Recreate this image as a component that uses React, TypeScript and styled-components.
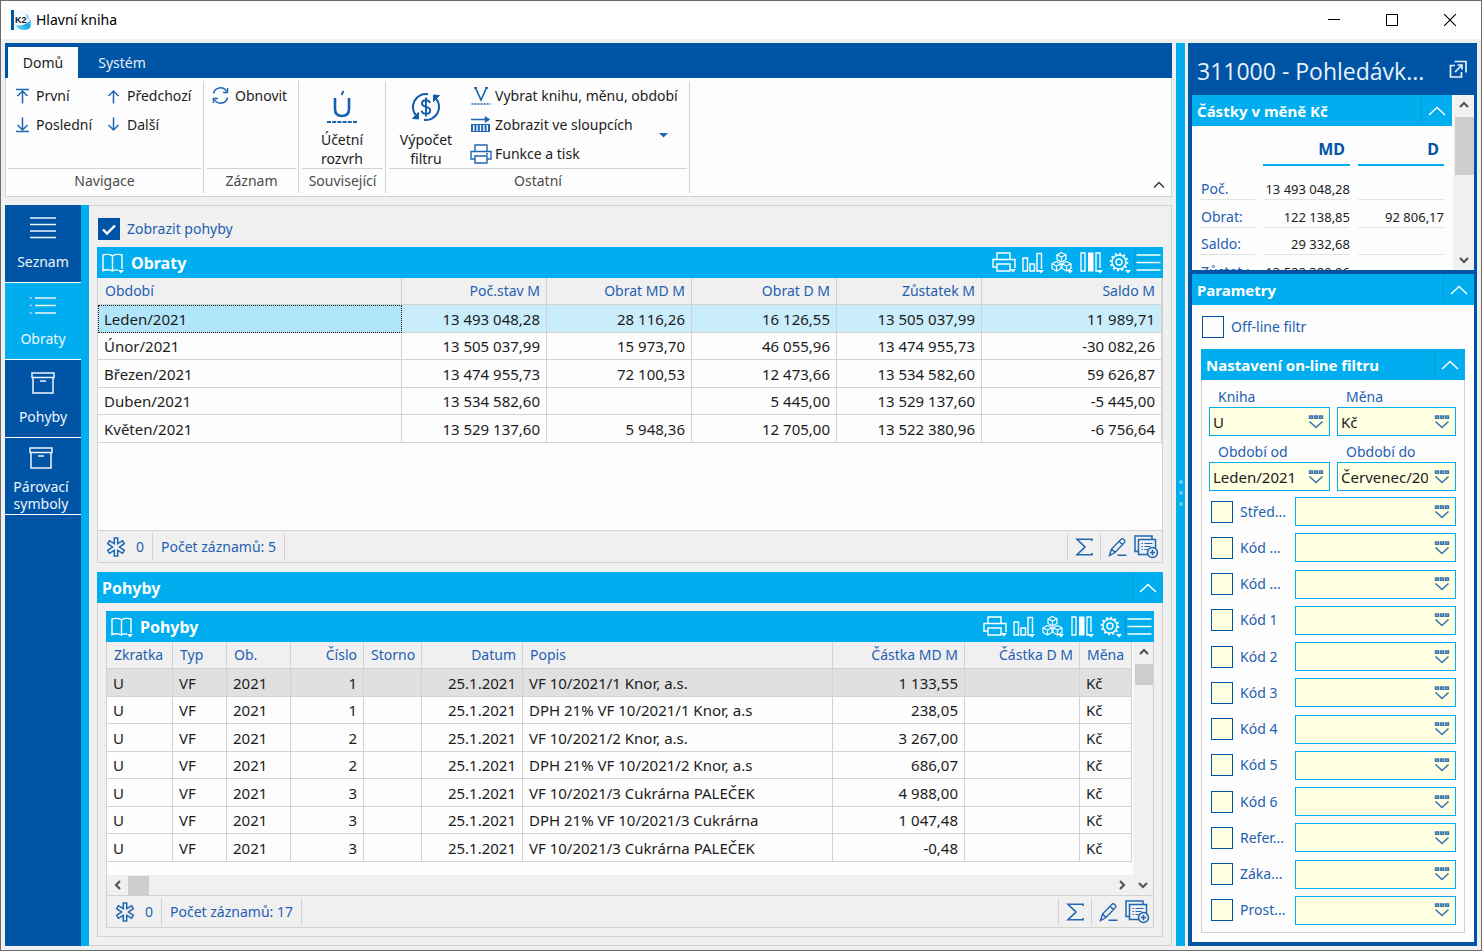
import React from "react";
import styled, { createGlobalStyle, css } from "styled-components";

const navy = "#0054a6";
const cyan = "#00aeef";
const label = "#1f5fb0";
const face = "#f0f0f0";
const paper = "#fdfdfd";
const rule = "#d2d2d2";
const field = "#ffffe1";

const GlobalStyle = createGlobalStyle`
  * { box-sizing: border-box; }
  body {
    margin: 0;
    background: ${face};
    color: #1c1c1c;
    font-family: "Noto Sans", "Open Sans", sans-serif;
    font-size: 14px;
    line-height: 20px;
  }
  button, input { font: inherit; color: inherit; }
  button { border: 0; padding: 0; background: none; cursor: pointer; }
  svg { display: block; flex: none; }
`;

/* ---------- window frame ---------- */

const Window = styled.div`
  min-height: 100vh;
  display: flex;
  flex-direction: column;
  border: 1px solid #6c6c6c;
  background: ${face};
`;

const TitleBar = styled.header`
  display: flex;
  align-items: center;
  height: 38px;
  padding: 0 2px 0 10px;
  background: #fff;
  color: #000;
`;

const WindowTitle = styled.h1`
  flex: 1;
  margin: 0 0 0 5px;
  font-size: 14px;
  font-weight: 400;
`;

const WindowButton = styled.button`
  width: 58px;
  height: 36px;
  display: grid;
  place-items: center;
`;

const Workspace = styled.div`
  flex: 1;
  display: grid;
  grid-template-columns: minmax(0, 1fr) 9px 292px;
  padding: 4px;
`;

const Primary = styled.div`
  display: flex;
  flex-direction: column;
  gap: 8px;
  margin-right: 4px;
  min-width: 0;
`;

const Splitter = styled.div`
  display: flex;
  flex-direction: column;
  align-items: center;
  justify-content: center;
  gap: 7px;
  padding-bottom: 4px;
  background: ${cyan};
`;

const SplitterDot = styled.span`
  width: 4px;
  height: 4px;
  border-radius: 2px;
  background: #62cdf5;
`;

/* ---------- ribbon ---------- */

const Ribbon = styled.section`
  border: 1px solid ${rule};
  border-top: 0;
  background: ${paper};
`;

const TabStrip = styled.div`
  display: flex;
  height: 35px;
  margin: 0 -1px;
  padding: 4px 3px 0;
  background: ${navy};
`;

const Tab = styled.button<{ $active?: boolean }>`
  width: ${(p) => (p.$active ? 70 : 88)}px;
  color: #e6eef7;
  ${(p) => p.$active && css`background: ${paper}; color: #222;`}
`;

const RibbonBody = styled.div`
  display: flex;
  align-items: flex-start;
  gap: 3px;
  height: 118px;
  padding: 3px 4px 0 2px;
`;

const RibbonGroup = styled.div<{ $width: number }>`
  width: ${(p) => p.$width}px;
  height: 112px;
  display: flex;
  flex-direction: column;
  padding-right: 2px;
  border-right: 1px solid ${rule};
`;

const GroupTools = styled.div<{ $inset?: number }>`
  flex: 1;
  display: flex;
  align-items: flex-start;
  padding-left: ${(p) => p.$inset ?? 7}px;
`;

const GroupLabel = styled.div`
  height: 25px;
  padding-top: 2px;
  border-top: 1px solid ${rule};
  color: #4c4c4c;
  text-align: center;
`;

const NavGrid = styled.div`
  display: grid;
  grid-template-columns: 91px auto;
`;

const CommandColumn = styled.div`
  display: flex;
  flex-direction: column;
  margin-left: 14px;
`;

const Command = styled.button<{ $gap?: number }>`
  display: flex;
  align-items: center;
  gap: ${(p) => p.$gap ?? 6}px;
  height: 29px;
  white-space: nowrap;
`;

const BigCommand = styled.button<{ $width: number }>`
  width: ${(p) => p.$width}px;
  height: 87px;
  display: flex;
  flex-direction: column;
  align-items: center;
  line-height: 19px;
`;

const BigIcon = styled.span`
  height: 49px;
  display: flex;
  align-items: center;
  padding-top: 2px;
`;

const MenuArrow = styled.button`
  align-self: center;
  margin-left: -19px;
  padding-top: 22px;
`;

const Collapse = styled.button`
  align-self: flex-end;
  margin: 0 2px 7px auto;
`;

/* ---------- side navigation and content ---------- */

const Body = styled.div`
  flex: 1;
  display: grid;
  grid-template-columns: 84px minmax(0, 1fr);
`;

const SideNav = styled.nav`
  background: ${navy};
  border-right: 8px solid ${cyan};
`;

const SideItem = styled.button<{ $active?: boolean; $tall?: boolean }>`
  width: 100%;
  height: 77px;
  display: flex;
  flex-direction: column;
  align-items: center;
  justify-content: space-between;
  padding: ${(p) => (p.$tall ? "9px 4px 2px 0" : "12px 0 10px")};
  border-bottom: 1px solid #fff;
  background: ${(p) => (p.$active ? cyan : navy)};
  color: #eef5fb;
  line-height: ${(p) => (p.$tall ? 17 : 20)}px;
  &:nth-child(odd) { height: 78px; }
`;

const Content = styled.main`
  display: flex;
  flex-direction: column;
  padding: 8px;
  border: 1px solid ${rule};
  border-left: 0;
`;

const CheckLabel = styled.label`
  display: flex;
  align-items: center;
  gap: 7px;
  color: ${label};
`;

const CheckBox = styled.input<{ $fill?: string }>`
  appearance: none;
  flex: none;
  width: 22px;
  height: 22px;
  margin: 0;
  border: 1px solid ${navy};
  background: ${(p) => p.$fill ?? paper};
  &:checked {
    background: ${navy}
      url("data:image/svg+xml,%3Csvg xmlns='http://www.w3.org/2000/svg' viewBox='0 0 20 20'%3E%3Cpath d='M4 10.5l4 4 8-8' fill='none' stroke='white' stroke-width='2.4'/%3E%3C/svg%3E")
      center / 20px no-repeat;
  }
`;

const ShowMoves = styled(CheckLabel)`
  margin: 4px 0 7px 1px;
`;

const Bar = styled.div`
  display: flex;
  align-items: center;
  height: 31px;
  flex: none;
  padding-left: 5px;
  background: ${cyan};
  color: #fff;
`;

const BarTitle = styled.h2<{ $afterIcon?: boolean }>`
  flex: 1;
  margin: 0;
  padding-left: ${(p) => (p.$afterIcon ? 7 : 0)}px;
  font-size: 16px;
  font-weight: 700;
  line-height: 24px;
`;

const PanelTitle = styled(BarTitle)`
  font-size: 15px;
`;

const BarTools = styled.div`
  display: flex;
  align-items: center;
  gap: 4px;
  padding-right: 2px;
`;

const MenuButton = styled.button`
  height: 27px;
  display: grid;
  align-items: center;
  margin-left: -3px;
  border-left: 1px solid #0797d3;
`;

const BarToggle = styled.button`
  width: 31px;
  height: 27px;
  display: grid;
  place-items: center;
  border-left: 1px solid #0797d3;
`;

const Frame = styled.section`
  display: flex;
  flex-direction: column;
  border: 1px solid ${rule};
  border-top: 0;
`;

const TurnoverFrame = styled(Frame)`
  margin-bottom: 9px;
`;

const TurnoverArea = styled.div`
  height: 252px;
  background: ${paper};
`;

const FullBar = styled(Bar)`
  margin: 0 -1px;
`;

const DataTable = styled.table`
  width: 100%;
  table-layout: fixed;
  border-collapse: separate;
  border-spacing: 0;
  font-size: 15px;
`;

const HeadCell = styled.th<{ $right?: boolean }>`
  height: 27px;
  padding: 0 6px 0 7px;
  border-right: 1px solid ${rule};
  border-bottom: 1px solid ${rule};
  background: ${face};
  color: ${label};
  font-size: 14px;
  font-weight: 400;
  text-align: ${(p) => (p.$right ? "right" : "left")};
  white-space: nowrap;
`;

const Cell = styled.td<{ $right?: boolean }>`
  padding: 0 6px;
  border-right: 1px solid ${rule};
  border-bottom: 1px solid ${rule};
  text-align: ${(p) => (p.$right ? "right" : "left")};
  white-space: nowrap;
  overflow: hidden;
`;

const Row = styled.tr<{ $fill?: string; $focus?: boolean }>`
  height: 28px;
  background: ${(p) => p.$fill ?? paper};
  &:nth-child(even) { height: 27px; }
  ${(p) =>
    p.$focus &&
    css`
      td:first-child {
        background: #b1e6fa;
        outline: 1px dotted #222;
        outline-offset: -1px;
      }
    `}
`;

const StatusBar = styled.footer`
  display: flex;
  align-items: center;
  height: 32px;
  flex: none;
  border-top: 1px solid ${rule};
  color: ${label};
`;

const StatusItem = styled.div`
  display: flex;
  align-items: center;
  gap: 10px;
  height: 27px;
  padding: 0 8px;
  border-right: 1px solid ${rule};
`;

const StatusTools = styled.div`
  display: flex;
  align-items: center;
  margin-left: auto;
  padding-right: 3px;
`;

const StatusTool = styled.button<{ $divider?: boolean }>`
  height: 27px;
  padding: ${(p) => (p.$divider ? "0 6px 0 7px" : 0)};
  border-left: ${(p) => (p.$divider ? `1px solid ${rule}` : "0")};
`;

const MovesFrame = styled(Frame)`
  flex: 1;
`;

const MovesInner = styled(Frame)`
  flex: 1;
  margin: 8px;
`;

const MovesArea = styled.div`
  flex: 1;
  display: grid;
  grid-template-columns: minmax(0, 1fr) 21px;
  grid-template-rows: minmax(0, 1fr) 20px;
`;

const MovesTable = styled.div`
  background: ${paper};
  overflow: hidden;
`;

const ScrollColumn = styled.div`
  display: flex;
  flex-direction: column;
  align-items: center;
  gap: 2px;
  background: ${face};
  border-left: 2px solid #fafafa;
`;

const ScrollRow = styled.div`
  display: flex;
  align-items: center;
  background: ${face};
`;

const ScrollButton = styled.button`
  width: 21px;
  height: 20px;
  flex: none;
  display: grid;
  place-items: center;
`;

const Thumb = styled.div<{ $w: number; $h: number }>`
  width: ${(p) => p.$w}px;
  height: ${(p) => p.$h}px;
  background: #cdcdcd;
`;

const PushEnd = styled(ScrollButton)`
  margin-left: auto;
`;

const PushBottom = styled(ScrollButton)`
  margin-top: auto;
`;

/* ---------- right panel ---------- */

const Side = styled.aside`
  display: flex;
  flex-direction: column;
  margin-left: 3px;
  padding: 0 3px 4px 4px;
  background: ${navy};
`;

const SideHead = styled.div`
  display: flex;
  align-items: center;
  height: 52px;
  padding: 4px 7px 0 5px;
  color: #e8f1fa;
`;

const SideTitle = styled.h2`
  flex: 1;
  margin: 0;
  font-family: "Open Sans", "Noto Sans", sans-serif;
  font-size: 23px;
  font-weight: 400;
  line-height: 32px;
  white-space: nowrap;
`;

const PopOut = styled.button`
  align-self: flex-start;
  padding-top: 13px;
`;

const Amounts = styled.section`
  display: grid;
  grid-template-columns: minmax(0, 1fr) 22px;
  height: 175px;
  flex: none;
  margin-bottom: 4px;
  background: ${paper};
  overflow: hidden;
`;

const AmountsMain = styled.div`
  height: 175px;
  overflow: hidden;
`;

const AmountTable = styled.table`
  width: 100%;
  table-layout: fixed;
  border-collapse: separate;
  border-spacing: 8px 0;
  font-size: 13px;
`;

const AmountHead = styled.th`
  height: 40px;
  padding: 8px 5px 0 0;
  border-bottom: 2px solid ${cyan};
  color: ${navy};
  font-size: 16px;
  text-align: right;
`;

const AmountName = styled.th`
  padding: 0 0 0 1px;
  border-bottom: 1px solid #e4e4e4;
  color: ${label};
  font-size: 14px;
  font-weight: 400;
  text-align: left;
`;

const AmountCell = styled.td`
  padding: 0;
  border-bottom: 1px solid #e4e4e4;
  text-align: right;
  white-space: nowrap;
`;

const AmountRow = styled.tr`
  height: 28px;
  vertical-align: bottom;
  &:first-child { height: 34px; }
  &:nth-child(3) { height: 27px; }
`;

const Params = styled.section`
  flex: 1;
  display: flex;
  flex-direction: column;
  background: ${paper};
`;

const Offline = styled(CheckLabel)`
  margin: 11px 0 11px 10px;
`;

const FilterBox = styled.section`
  flex: 1;
  display: flex;
  flex-direction: column;
  margin: 0 9px 9px;
  border: 1px solid ${rule};
  border-top: 0;
`;

const FilterGrid = styled.div`
  display: grid;
  grid-template-columns: 121px minmax(0, 1fr);
  gap: 0 7px;
  padding: 7px 8px 7px 7px;
`;

const FieldLabel = styled.label`
  display: block;
  height: 20px;
  padding-left: 9px;
  color: ${label};
`;

const FieldGroup = styled.div`
  height: 55px;
  &:nth-child(n + 3) { height: 57px; }
`;

const Lookup = styled.span`
  display: flex;
  align-items: center;
  width: 100%;
  height: 29px;
  border: 1px solid ${cyan};
  background: ${field};
`;

const LookupInput = styled.input`
  flex: 1;
  min-width: 0;
  height: 27px;
  padding: 0 0 0 3px;
  border: 0;
  outline: 0;
  background: none;
  color: #1c1c1c;
  font-size: 15px;
`;

const LookupButton = styled.button`
  width: 27px;
  height: 27px;
  display: grid;
  place-items: center;
`;

const CodeList = styled.div`
  flex: 1;
  display: flex;
  flex-direction: column;
  justify-content: space-between;
  margin-top: -9px;
  padding: 0 8px 7px 9px;
`;

const CodeRow = styled.div`
  display: grid;
  grid-template-columns: 84px minmax(0, 1fr);
  align-items: center;
`;

/* ---------- icons ---------- */

type IconProps = { w: number; h: number; color?: string; sw?: number; children: React.ReactNode };
const Icon = ({ w, h, color = "#1f66b3", sw = 1.5, children }: IconProps) => (
  <svg width={w} height={h} viewBox={`0 0 ${w} ${h}`} fill="none" stroke={color} strokeWidth={sw} aria-hidden="true">
    {children}
  </svg>
);

const AppIcon = () => (
  <svg width="20" height="20" viewBox="0 0 20 20" aria-hidden="true">
    <defs>
      <linearGradient id="wave" x1="0" y1="1" x2="1" y2="0">
        <stop offset="0" stopColor="#6fe3f7" />
        <stop offset="0.6" stopColor="#18a6ee" />
        <stop offset="1" stopColor="#9fd8f5" />
      </linearGradient>
    </defs>
    <rect x="3" width="17" height="20" fill="#f4fafc" />
    <rect width="3" height="20" fill={navy} />
    <path d="M5 15c5 1.500 10 0 15-6v6c0 3-3 5-7 5-4 0-7-2-8-5z" fill="url(#wave)" />
    <path d="M14 4l3 1 2 5-3-2z" fill="#9bd6f3" />
    <text x="4" y="13" fontFamily="Liberation Sans, sans-serif" fontSize="9" fontWeight="700" fill="#101820">K2</text>
  </svg>
);

const ArrowIcon = ({ down, stop }: { down?: boolean; stop?: boolean }) => (
  <Icon w={15} h={16}>
    <g transform={down ? "rotate(180 7.500 8)" : undefined}>
      {stop && <path d="M1 1.500h13" />}
      <path d="M7.500 15.500V2.500M2.500 8l5-5 5 5" />
    </g>
  </Icon>
);

const RefreshIcon = () => (
  <Icon w={17} h={17}>
    <path d="M1.500 6.500A7 7 0 0 1 14.500 4.500M15.500 10.500A7 7 0 0 1 2.500 12.500" />
    <path d="M15.500 1v4.500H11M1.500 16v-4.500H6" />
  </Icon>
);

const AccountIcon = () => (
  <Icon w={32} h={36} sw={2.600} color="#1760ae">
    <path d="M9 9v11c0 4.500 2.500 7 7 7s7-2.500 7-7V9" />
    <path d="M15.500 6l2-4" strokeWidth="2" />
    <path d="M1 33h30" strokeWidth="2.200" strokeDasharray="4 1.200" />
  </Icon>
);

const CalcIcon = () => (
  <Icon w={30} h={30} sw={2} color="#0f5cad">
    <path d="M5.500 24A13 13 0 0 1 17 2.200M24.500 6A13 13 0 0 1 13 27.800" />
    <path d="M1.500 26.500l6 .5V20.500zM28.500 3.500l-6-.5V9.500z" fill="#0f5cad" strokeWidth="1" />
    <path d="M19 11c-.5-2-2-2.800-4-2.800-2.300 0-4 1-4 3.200 0 4.600 8.200 2.200 8.200 7 0 2.200-1.800 3.400-4.200 3.400-2.300 0-4-1-4.300-3.200M15 5.500v19" strokeWidth="1.900" />
  </Icon>
);

const SelectBookIcon = () => (
  <Icon w={22} h={20} sw={1.700}>
    <path d="M5.500 2L11 14 16.500 2M4 1.800h3M15 1.800h3" />
    <path d="M1.500 18h19" strokeDasharray="2 1" />
  </Icon>
);

const ColumnsArrowIcon = () => (
  <Icon w={22} h={17}>
    <path d="M1 3.500h17" />
    <path d="M15 .500l5 3-5 3z" fill="#1f66b3" strokeWidth=".5" />
    <path d="M1 8.500h19M1 15.500h19" strokeWidth="1" />
    <path d="M2 8v8M5.400 8v8M8.800 8v8M12.200 8v8M15.600 8v8M19 8v8" strokeWidth="2" />
  </Icon>
);

const PrintIcon = () => (
  <Icon w={22} h={20} sw={1.400}>
    <path d="M5 7V1h12v6M5 15H1V7.500h20V15h-4M5 12h12v7H5zM16 9.800h2" />
  </Icon>
);

const WhiteCaret = ({ x, y }: { x: number; y: number }) => (
  <path d={`M${x} ${y}h6l-3 3.500z`} fill="#fff" stroke="none" />
);

const BookIcon = () => (
  <Icon w={22} h={22} color="#fff" sw={1.400}>
    <path d="M10.500 19V4C9 2 3 2 1 3v15.500c2-1 7-1 9.500.5 1.500-1 3.500-1.300 5.500-1M10.500 4C12 2 18 2 20 3v14" />
    <WhiteCaret x={16} y={18} />
  </Icon>
);

const BarPrintIcon = () => (
  <Icon w={25} h={23} color="#fff" sw={1.400}>
    <path d="M5 8V2h13v6M5 16H1V8.500h22V17M5 13h13v7H5z" />
    <WhiteCaret x={18} y={18} />
  </Icon>
);

const BarChartIcon = () => (
  <Icon w={25} h={23} color="#fff" sw={1.400}>
    <path d="M2 7h4.500v13H2zM9 13h4.500v7H9zM20.500 18V2.500h-4.500V20h2" />
    <WhiteCaret x={17} y={19} />
  </Icon>
);

const CubesIcon = () => (
  <Icon w={25} h={23} color="#fff" sw={1.200}>
    <path d="M11.500 1.500l4.500 2.300v4.700L11.500 11 7 8.500V3.800zM7 3.800l4.500 2.200L16 3.800M11.500 6v5" />
    <path d="M6.500 10.500l4.500 2.300v4.700L6.500 20 2 17.500v-4.700zM2 12.800L6.500 15l4.500-2.200M6.500 15v5" />
    <path d="M16.500 10.500l4.500 2.300v4.700L16.500 20 12 17.500v-4.700zM12 12.800l4.500 2.200 4.500-2.200M16.500 15v5" />
    <WhiteCaret x={17} y={19} />
  </Icon>
);

const BarColumnsIcon = () => (
  <Icon w={25} h={23} color="#fff" sw={1.300}>
    <path d="M2 2h4v18H2zM21 17V2h-4v18h2" />
    <path d="M9 1.500h5.500v19H9z" fill="#fff" stroke="none" />
    <WhiteCaret x={18} y={19} />
  </Icon>
);

const GearIcon = () => (
  <Icon w={25} h={23} color="#fff" sw={1.400}>
    <circle cx="11" cy="11" r="7" />
    <circle cx="11" cy="11" r="3" />
    <circle cx="11" cy="11" r="8.300" strokeDasharray="1.900 2.440" strokeWidth="2" />
    <WhiteCaret x={17} y={19} />
  </Icon>
);

const MenuIcon = () => (
  <Icon w={26} h={23} color="#fff" sw={1.600}>
    <path d="M1.500 4h24M1.500 11.500h24M1.500 19h24" />
  </Icon>
);

const ListIcon = () => (
  <Icon w={26} h={22} color="#eef5fb">
    <path d="M0 1h26M0 7.500h26M0 14h26M0 20.500h26" />
  </Icon>
);

const BulletsIcon = () => (
  <Icon w={26} h={22} color="#eef5fb">
    <path d="M5 3h21M5 10.500h21M5 18h21M0 3h1.500M0 10.500h1.500M0 18h1.500" />
  </Icon>
);

const BoxIcon = () => (
  <Icon w={24} h={22} color="#eef5fb">
    <path d="M1 1h22v4.500H1zM2 5.500v15.500h20V5.500M9 9h6" />
  </Icon>
);

const Chevron = ({ color = "#fff", small }: { color?: string; small?: boolean }) =>
  small ? (
    <Icon w={12} h={8} color={color} sw={1.300}><path d="M1 6.500l5-5 5 5" /></Icon>
  ) : (
    <Icon w={18} h={10} color={color}><path d="M1 9l8-7.500L17 9" /></Icon>
  );

const ScrollArrow = ({ turn = 0 }: { turn?: number }) => (
  <Icon w={12} h={12} color="#555" sw={2.200}>
    <path d="M2 8l4-4 4 4" transform={`rotate(${turn} 6 6)`} />
  </Icon>
);

const StarIcon = () => (
  <Icon w={20} h={20} sw={1.500}>
    <path d="M8.300 1h3.400v5.600l4.900-2.900 1.700 3L13.500 10l4.800 3.300-1.700 3-4.900-2.900V19H8.300v-5.600l-4.900 2.900-1.700-3L6.500 10 1.700 6.700l1.700-3 4.900 2.900z" />
  </Icon>
);

const SumIcon = () => (
  <Icon w={19} h={18} sw={1.600}><path d="M17 3V1.200H2L10 9l-8 7.800h15V15" /></Icon>
);

const PencilIcon = () => (
  <Icon w={20} h={20} sw={1.400}>
    <path d="M1.500 18.500L3.500 12 13 2.200c1.500-1.300 4.800 1.200 3.600 3.200L7 15.500zM11 4.300l3.800 3.500M3.500 12L7 15.500M9.500 18.300h9" />
  </Icon>
);

const AddSheetIcon = () => (
  <Icon w={25} h={24} sw={1.500}>
    <path d="M4 16.500H1V1h17v3M14 19.500H4.500v-15h17V13" />
    <path d="M7.500 8.500h1.500M10.500 8.500h8M7.500 11.500h1.500M10.500 11.500h6M7.500 14.500h1.500M10.500 14.500h3" strokeWidth="1.200" />
    <circle cx="18.500" cy="17.500" r="5" fill={face} />
    <path d="M15.800 17.500h5.400M18.500 14.800v5.400" />
  </Icon>
);

const LookupIcon = () => (
  <Icon w={16} h={14} color="#3b74ae" sw={1.600}>
    <path d="M1.600 1h2.800v2.200H1.600zM6.600 1h2.800v2.200H6.600zM11.600 1h2.800v2.200h-2.800z" strokeWidth="1.600" />
    <path d="M1.500 6.500L8 12.500l6.500-6" />
  </Icon>
);

const PopOutIcon = () => (
  <Icon w={18} h={18} color="#e8f1fa" sw={1.700}>
    <path d="M6 5.500H1.500V17h11v-5M5.500 1.500H17v11M6 12l7-7M8.500 5H13v4.500" />
  </Icon>
);

/* ---------- data ---------- */

const turnoverHeads = ["Období", "Poč.stav M", "Obrat MD M", "Obrat D M", "Zůstatek M", "Saldo M"];
const turnovers = [
  ["Leden/2021", "13 493 048,28", "28 116,26", "16 126,55", "13 505 037,99", "11 989,71"],
  ["Únor/2021", "13 505 037,99", "15 973,70", "46 055,96", "13 474 955,73", "-30 082,26"],
  ["Březen/2021", "13 474 955,73", "72 100,53", "12 473,66", "13 534 582,60", "59 626,87"],
  ["Duben/2021", "13 534 582,60", "", "5 445,00", "13 529 137,60", "-5 445,00"],
  ["Květen/2021", "13 529 137,60", "5 948,36", "12 705,00", "13 522 380,96", "-6 756,64"],
];

type Column = { name: string; width?: number; right?: boolean };
const moveColumns: Column[] = [
  { name: "Zkratka", width: 66 },
  { name: "Typ", width: 54 },
  { name: "Ob.", width: 64 },
  { name: "Číslo", width: 73, right: true },
  { name: "Storno", width: 58 },
  { name: "Datum", width: 101, right: true },
  { name: "Popis" },
  { name: "Částka MD M", width: 132, right: true },
  { name: "Částka D M", width: 115, right: true },
  { name: "Měna", width: 52 },
];
const moves = [
  ["1", "VF 10/2021/1 Knor, a.s.", "1 133,55"],
  ["1", "DPH 21% VF 10/2021/1 Knor, a.s", "238,05"],
  ["2", "VF 10/2021/2 Knor, a.s.", "3 267,00"],
  ["2", "DPH 21% VF 10/2021/2 Knor, a.s", "686,07"],
  ["3", "VF 10/2021/3 Cukrárna PALEČEK", "4 988,00"],
  ["3", "DPH 21% VF 10/2021/3 Cukrárna", "1 047,48"],
  ["3", "VF 10/2021/3 Cukrárna PALEČEK", "-0,48"],
].map(([no, text, md]) => ["U", "VF", "2021", no, "", "25.1.2021", text, md, "", "Kč"]);

const amounts = [
  ["Poč.", "13 493 048,28", ""],
  ["Obrat:", "122 138,85", "92 806,17"],
  ["Saldo:", "29 332,68", ""],
  ["Zůstat.:", "13 522 380,96", ""],
];

const filters = [
  ["Kniha", "U"],
  ["Měna", "Kč"],
  ["Období od", "Leden/2021"],
  ["Období do", "Červenec/2021"],
];

const codes = [
  "Střed...", "Kód ...", "Kód ...", "Kód 1", "Kód 2", "Kód 3",
  "Kód 4", "Kód 5", "Kód 6", "Refer...", "Záka...", "Prost...",
];

/* ---------- parts ---------- */

const GridTools = () => (
  <BarTools>
    <button aria-label="Tisk"><BarPrintIcon /></button>
    <button aria-label="Graf"><BarChartIcon /></button>
    <button aria-label="Kostky"><CubesIcon /></button>
    <button aria-label="Sloupce"><BarColumnsIcon /></button>
    <button aria-label="Nastavení"><GearIcon /></button>
    <MenuButton aria-label="Nabídka"><MenuIcon /></MenuButton>
  </BarTools>
);

const Status = ({ count }: { count: number }) => (
  <StatusBar>
    <StatusItem><StarIcon />0</StatusItem>
    <StatusItem>Počet záznamů: {count}</StatusItem>
    <StatusTools>
      <StatusTool $divider aria-label="Součet"><SumIcon /></StatusTool>
      <StatusTool $divider aria-label="Upravit"><PencilIcon /></StatusTool>
      <StatusTool aria-label="Přidat"><AddSheetIcon /></StatusTool>
    </StatusTools>
  </StatusBar>
);

const LookupField = ({ id, value = "", name }: { id?: string; value?: string; name?: string }) => (
  <Lookup>
    <LookupInput id={id} defaultValue={value} aria-label={name} />
    <LookupButton aria-label="Vybrat"><LookupIcon /></LookupButton>
  </Lookup>
);

const MainRibbon = () => (
  <Ribbon>
    <TabStrip>
      <Tab $active>Domů</Tab>
      <Tab>Systém</Tab>
    </TabStrip>
    <RibbonBody>
      <RibbonGroup $width={196}>
        <GroupTools>
          <NavGrid>
            <Command><ArrowIcon stop />První</Command>
            <Command><ArrowIcon />Předchozí</Command>
            <Command><ArrowIcon down stop />Poslední</Command>
            <Command><ArrowIcon down />Další</Command>
          </NavGrid>
        </GroupTools>
        <GroupLabel>Navigace</GroupLabel>
      </RibbonGroup>
      <RibbonGroup $width={92}>
        <GroupTools $inset={5}>
          <Command><RefreshIcon />Obnovit</Command>
        </GroupTools>
        <GroupLabel>Záznam</GroupLabel>
      </RibbonGroup>
      <RibbonGroup $width={84}>
        <GroupTools>
          <BigCommand $width={66}><BigIcon><AccountIcon /></BigIcon>Účetní<br />rozvrh</BigCommand>
        </GroupTools>
        <GroupLabel>Související</GroupLabel>
      </RibbonGroup>
      <RibbonGroup $width={301}>
        <GroupTools>
          <BigCommand $width={60}><BigIcon><CalcIcon /></BigIcon>Výpočet<br />filtru</BigCommand>
          <CommandColumn>
            <Command $gap={3}><SelectBookIcon />Vybrat knihu, měnu, období</Command>
            <Command $gap={3}><ColumnsArrowIcon />Zobrazit ve sloupcích</Command>
            <Command $gap={3}><PrintIcon />Funkce a tisk</Command>
          </CommandColumn>
          <MenuArrow aria-label="Další funkce">
            <Icon w={9} h={5}><path d="M0 0h9L4.500 4.500z" fill="#1f66b3" stroke="none" /></Icon>
          </MenuArrow>
        </GroupTools>
        <GroupLabel>Ostatní</GroupLabel>
      </RibbonGroup>
      <Collapse aria-label="Sbalit"><Chevron small color="#333" /></Collapse>
    </RibbonBody>
  </Ribbon>
);

const Turnovers = () => (
  <TurnoverFrame>
    <FullBar>
      <BookIcon />
      <BarTitle $afterIcon>Obraty</BarTitle>
      <GridTools />
    </FullBar>
    <TurnoverArea>
      <DataTable>
        <colgroup>
          <col />
          <col width="145" /><col width="145" /><col width="145" /><col width="145" /><col width="180" />
        </colgroup>
        <thead>
          <tr>{turnoverHeads.map((h, i) => <HeadCell key={h} $right={i > 0}>{h}</HeadCell>)}</tr>
        </thead>
        <tbody>
          {turnovers.map((r, i) => (
            <Row key={r[0]} $fill={i === 0 ? "#c9edfa" : undefined} $focus={i === 0}>
              {r.map((c, j) => <Cell key={j} $right={j > 0}>{c}</Cell>)}
            </Row>
          ))}
        </tbody>
      </DataTable>
    </TurnoverArea>
    <Status count={5} />
  </TurnoverFrame>
);

const Moves = () => (
  <MovesFrame>
    <FullBar>
      <BarTitle>Pohyby</BarTitle>
      <BarToggle aria-label="Sbalit"><Chevron /></BarToggle>
    </FullBar>
    <MovesInner>
      <FullBar>
        <BookIcon />
        <BarTitle $afterIcon>Pohyby</BarTitle>
        <GridTools />
      </FullBar>
      <MovesArea>
        <MovesTable>
          <DataTable>
            <colgroup>{moveColumns.map((c) => <col key={c.name} width={c.width} />)}</colgroup>
            <thead>
              <tr>{moveColumns.map((c) => <HeadCell key={c.name} $right={c.right}>{c.name}</HeadCell>)}</tr>
            </thead>
            <tbody>
              {moves.map((r, i) => (
                <Row key={i} $fill={i === 0 ? "#e0e0e0" : undefined}>
                  {r.map((c, j) => <Cell key={j} $right={moveColumns[j].right}>{c}</Cell>)}
                </Row>
              ))}
            </tbody>
          </DataTable>
        </MovesTable>
        <ScrollColumn>
          <ScrollButton aria-label="Nahoru"><ScrollArrow /></ScrollButton>
          <Thumb $w={18} $h={21} />
        </ScrollColumn>
        <ScrollRow>
          <ScrollButton aria-label="Vlevo"><ScrollArrow turn={-90} /></ScrollButton>
          <Thumb $w={21} $h={19} />
          <PushEnd aria-label="Vpravo"><ScrollArrow turn={90} /></PushEnd>
        </ScrollRow>
        <ScrollButton aria-label="Dolů"><ScrollArrow turn={180} /></ScrollButton>
      </MovesArea>
      <Status count={17} />
    </MovesInner>
  </MovesFrame>
);

const AccountPanel = () => (
  <Side>
    <SideHead>
      <SideTitle>311000 - Pohledávk...</SideTitle>
      <PopOut aria-label="Otevřít"><PopOutIcon /></PopOut>
    </SideHead>
    <Amounts>
      <AmountsMain>
        <Bar>
          <PanelTitle>Částky v měně Kč</PanelTitle>
          <BarToggle aria-label="Sbalit"><Chevron /></BarToggle>
        </Bar>
        <AmountTable>
          <colgroup><col /><col width="87" /><col width="86" /></colgroup>
          <thead>
            <tr><th /><AmountHead>MD</AmountHead><AmountHead>D</AmountHead></tr>
          </thead>
          <tbody>
            {amounts.map((r) => (
              <AmountRow key={r[0]}>
                <AmountName>{r[0]}</AmountName>
                <AmountCell>{r[1]}</AmountCell>
                <AmountCell>{r[2]}</AmountCell>
              </AmountRow>
            ))}
          </tbody>
        </AmountTable>
      </AmountsMain>
      <ScrollColumn>
        <ScrollButton aria-label="Nahoru"><ScrollArrow /></ScrollButton>
        <Thumb $w={19} $h={58} />
        <PushBottom aria-label="Dolů"><ScrollArrow turn={180} /></PushBottom>
      </ScrollColumn>
    </Amounts>
    <Params>
      <Bar>
        <PanelTitle>Parametry</PanelTitle>
        <BarToggle aria-label="Sbalit"><Chevron /></BarToggle>
      </Bar>
      <Offline><CheckBox type="checkbox" />Off-line filtr</Offline>
      <FilterBox>
        <FullBar>
          <PanelTitle>Nastavení on-line filtru</PanelTitle>
          <BarToggle aria-label="Sbalit"><Chevron /></BarToggle>
        </FullBar>
        <FilterGrid>
          {filters.map(([name, value]) => (
            <FieldGroup key={name}>
              <FieldLabel htmlFor={name}>{name}</FieldLabel>
              <LookupField id={name} value={value} />
            </FieldGroup>
          ))}
        </FilterGrid>
        <CodeList>
          {codes.map((name, i) => (
            <CodeRow key={i}>
              <CheckLabel><CheckBox type="checkbox" $fill={field} />{name}</CheckLabel>
              <LookupField name={name} />
            </CodeRow>
          ))}
        </CodeList>
      </FilterBox>
    </Params>
  </Side>
);

export default function App() {
  return (
    <>
      <GlobalStyle />
      <Window>
        <TitleBar>
          <AppIcon />
          <WindowTitle>Hlavní kniha</WindowTitle>
          <WindowButton aria-label="Minimalizovat"><Icon w={12} h={12} color="#000" sw={1}><path d="M0 5.500h12" /></Icon></WindowButton>
          <WindowButton aria-label="Maximalizovat"><Icon w={12} h={12} color="#000" sw={1}><path d="M.5.5h11v11H.5z" /></Icon></WindowButton>
          <WindowButton aria-label="Zavřít"><Icon w={12} h={12} color="#000" sw={1.100}><path d="M0 0l12 12M12 0L0 12" /></Icon></WindowButton>
        </TitleBar>
        <Workspace>
          <Primary>
            <MainRibbon />
            <Body>
              <SideNav>
                <SideItem><ListIcon />Seznam</SideItem>
                <SideItem $active><BulletsIcon />Obraty</SideItem>
                <SideItem><BoxIcon />Pohyby</SideItem>
                <SideItem $tall><BoxIcon /><span>Párovací<br />symboly</span></SideItem>
              </SideNav>
              <Content>
                <ShowMoves><CheckBox type="checkbox" defaultChecked />Zobrazit pohyby</ShowMoves>
                <Turnovers />
                <Moves />
              </Content>
            </Body>
          </Primary>
          <Splitter><SplitterDot /><SplitterDot /><SplitterDot /></Splitter>
          <AccountPanel />
        </Workspace>
      </Window>
    </>
  );
}
